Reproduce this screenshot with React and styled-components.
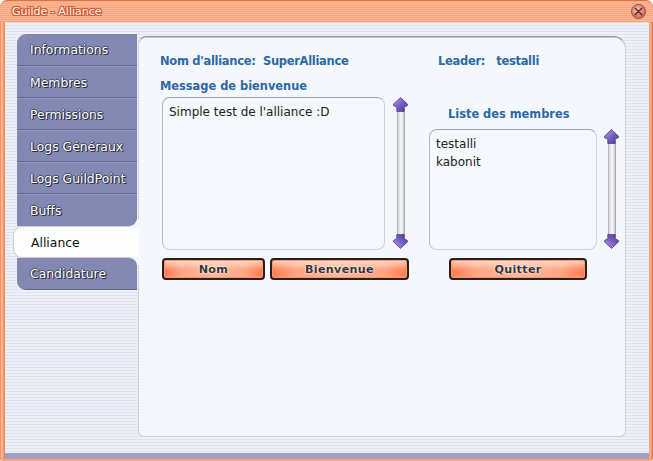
import React from "react";
import styled, { createGlobalStyle, css } from "styled-components";

const Global = createGlobalStyle`
  html, body { margin: 0; padding: 0; background: #ffffff; overflow: hidden; }
  * { box-sizing: border-box; }
`;

const FONT = `"DejaVu Sans", Verdana, sans-serif`;

const Window = styled.div`
  width: 653px;
  height: 461px;
  display: flex;
  flex-direction: column;
  border-radius: 7px 7px 3px 3px;
  background: linear-gradient(to right, #d9693a 0, #fbbb9a 1px, #fbbb9a 2px, #f08a5c 4px, #f08a5c calc(100% - 4px), #fbb898 calc(100% - 3px), #e2703f 100%);
  overflow: hidden;
  font-family: ${FONT};
`;

const TitleBar = styled.div`
  height: 22px;
  flex-shrink: 0;
  display: flex;
  align-items: center;
  justify-content: space-between;
  padding: 0 7px 0 12px;
  border-top: 1px solid #d8754b;
  border-radius: 7px 7px 0 0;
  background:
    repeating-linear-gradient(to bottom, #f7a682 0, #f7a682 1px, #fab796 1px, #fab796 2px);
`;

const Title = styled.span`
  font-size: 11px;
  color: #ffffff;
  line-height: 14px;
  text-shadow: 1px 0 0 #d4582c, -1px 0 0 #d4582c, 0 1px 0 #d4582c, 0 -1px 0 #d4582c,
    1px 1px 0 #d4582c, -1px -1px 0 #d4582c, 1px -1px 0 #d4582c, -1px 1px 0 #d4582c;
`;

const CloseBtn = styled.div`
  width: 15px;
  height: 15px;
  border-radius: 50%;
  border: 1px solid #9c4236;
  background: radial-gradient(circle at 40% 35%, #f8c8be 0, #e08a7c 45%, #c25a4c 100%);
  display: flex;
  align-items: center;
  justify-content: center;
`;

const Body = styled.div`
  flex: 1;
  margin: 0 4px 0 5px;
  display: flex;
  align-items: flex-start;
  padding: 11px 0 0 12px;
  border-top: 1px solid #f6d2c2;
  background: repeating-linear-gradient(to bottom, #eef1f8 0, #eef1f8 2px, #dfe3ef 2px, #dfe3ef 3px);
`;

const BottomBar = styled.div`
  height: 6px;
  margin: 0 4px 0 5px;
  flex-shrink: 0;
  background: linear-gradient(to bottom, #9ea0c6, #a89fbd);
`;

const BottomEdge = styled.div`
  height: 2px;
  flex-shrink: 0;
  background: #f5a480;
`;

const TabColumn = styled.div`
  width: 121px;
  flex-shrink: 0;
  display: flex;
  flex-direction: column;
  position: relative;
  z-index: 2;
`;

const Tab = styled.div`
  height: 32px;
  width: 120px;
  display: flex;
  align-items: center;
  padding-left: 13px;
  font-size: 12.4px;
  color: #ffffff;
  position: relative;
  background: #8288b1;
  border-top: 1px solid #959bc0;
  border-bottom: 1px solid #5f6690;
  text-shadow: 1px 1px 0 #2a2d40, -1px 0 0 #4a4f70, 0 -1px 0 #4a4f70, 1px 0 0 #3a3e58;
  ${(p) => p.$first && css`border-top-left-radius: 9px; border-top: none;`}
  ${(p) => p.$last && css`border-bottom-left-radius: 9px;`}
  ${(p) => p.$beforeActive && css`border-bottom-right-radius: 8px; border-bottom: none;`}
  ${(p) => p.$afterActive && css`border-top-right-radius: 8px; border-top: none;`}
  ${(p) =>
    p.$active &&
    css`
      width: 126px;
      margin-left: -4px;
      padding-left: 17px;
      background: #fdfdfe;
      color: #111111;
      text-shadow: none;
      border: 1px solid #c9ccd3;
      border-right: none;
      border-radius: 9px 0 0 9px;
      z-index: 1;
      &::before, &::after {
        content: "";
        position: absolute;
        right: 0;
        width: 9px;
        height: 9px;
        background: #f4f7fc;
        z-index: -1;
      }
      &::before { top: -8px; }
      &::after { bottom: -8px; }
    `}
  ${(p) => (p.$beforeActive || p.$afterActive) && css`z-index: 2;`}
`;

const Panel = styled.div`
  width: 488px;
  height: 401px;
  margin-top: 2px;
  flex-shrink: 0;
  background: #f4f7fc;
  border: 1px solid #cdd0d6;
  border-top-color: #8f939c;
  border-radius: 8px 12px 6px 6px;
  box-shadow: inset 0 1px 0 #c4c8d0;
  padding: 17px 0 0 21px;
  display: grid;
  grid-template-columns: 249px 190px;
  column-gap: 20px;
  row-gap: 11px;
  align-items: end;
  align-content: start;
`;

const InfoText = styled.div`
  font-size: ${(p) => p.$size || 11.4}px;
  letter-spacing: ${(p) => p.$ls || 0}px;
  font-weight: bold;
  line-height: 14px;
  color: #2d69a4;
  white-space: pre;
  padding-left: ${(p) => p.$indent || 0}px;
`;

const Column = styled.div`
  display: flex;
  flex-direction: column;
`;

const Label = styled(InfoText)`
  margin-bottom: ${(p) => p.$gap}px;
`;

const BoxRow = styled.div`
  display: flex;
  align-items: flex-start;
  gap: ${(p) => p.$gap}px;
  margin-left: ${(p) => p.$offset || 0}px;
`;

const TextBox = styled.div`
  width: ${(p) => p.$w}px;
  height: ${(p) => p.$h}px;
  border: 1px solid #cfd2d7;
  border-top-color: #a3a6ac;
  border-left-color: #b8bbc1;
  border-radius: 8px;
  background: #f5f8fc;
  padding: 5px 6px;
  font-size: 12px;
  line-height: 18px;
  color: #222222;
`;

const Scroll = styled.div`
  width: 15px;
  height: ${(p) => p.$h}px;
  display: flex;
  flex-direction: column;
  align-items: center;
`;

const Track = styled.div`
  flex: 1;
  width: 8px;
  margin: -3px 0;
  border-left: 1px solid #b4b6bc;
  border-right: 1px solid #a8aab0;
  background: linear-gradient(to right, #d2d4d8, #f8f8f9 45%, #e4e5e8 80%, #c6c8cc);
`;

const ButtonRow = styled.div`
  display: flex;
  gap: 5px;
  margin-top: 8px;
  margin-left: ${(p) => p.$offset || 0}px;
`;

const Button = styled.button`
  width: ${(p) => p.$w}px;
  height: 22px;
  padding: 0;
  border: 2px solid #2e1e18;
  border-radius: 4px;
  font-family: ${FONT};
  font-size: 11.2px;
  font-weight: bold;
  letter-spacing: 0.3px;
  color: #3a3434;
  text-shadow: 0 0 2px #ffffff, 0 0 1px #ffffff;
  background:
    linear-gradient(to bottom, rgba(255, 235, 225, 0.8) 0, rgba(255, 220, 200, 0.2) 45%, rgba(255, 255, 255, 0) 60%),
    linear-gradient(to right, #ff7c4c 0, #ffa584 18%, #ffb79c 50%, #ffa584 82%, #ff7c4c 100%);
  box-shadow: inset 0 0 0 1px #f29a78;
`;

const Arrow = ({ down }) => (
  <svg width="15" height="15" viewBox="0 0 15 15" style={{ display: "block", position: "relative", zIndex: 1, transform: down ? "scaleY(-1)" : "none" }}>
    <defs>
      <linearGradient id={down ? "ad" : "au"} x1="0" y1="0" x2="1" y2="1">
        <stop offset="0" stopColor="#b7a2ec" />
        <stop offset="0.5" stopColor="#7a5ec4" />
        <stop offset="1" stopColor="#4f3892" />
      </linearGradient>
    </defs>
    <path
      d="M7.5 0.6 L14.4 7 L14.4 8.6 L11.2 10.3 L11.2 14.6 L3.8 14.6 L3.8 10.3 L0.6 8.6 L0.6 7 Z"
      fill={`url(#${down ? "ad" : "au"})`}
      stroke="#4b3a82"
      strokeWidth="0.8"
      strokeLinejoin="round"
    />
  </svg>
);

const ScrollBar = ({ h }) => (
  <Scroll $h={h}>
    <Arrow />
    <Track />
    <Arrow down />
  </Scroll>
);

const tabs = [
  "Informations",
  "Membres",
  "Permissions",
  "Logs Généraux",
  "Logs GuildPoint",
  "Buffs",
  "Alliance",
  "Candidature",
];
const ACTIVE = 6;

export default function App() {
  return (
    <>
      <Global />
      <Window>
        <TitleBar>
          <Title>Guilde - Alliance</Title>
          <CloseBtn>
            <svg width="9" height="9" viewBox="0 0 9 9">
              <path d="M1.2 1.2 L7.8 7.8 M7.8 1.2 L1.2 7.8" stroke="#5b2a22" strokeWidth="1.4" strokeLinecap="round" />
            </svg>
          </CloseBtn>
        </TitleBar>
        <Body>
          <TabColumn>
            {tabs.map((t, i) => (
              <Tab
                key={t}
                $first={i === 0}
                $last={i === tabs.length - 1}
                $active={i === ACTIVE}
                $beforeActive={i === ACTIVE - 1}
                $afterActive={i === ACTIVE + 1}
              >
                {t}
              </Tab>
            ))}
          </TabColumn>
          <Panel>
            <InfoText $size={11.5} $ls={-0.3}>{"Nom d'alliance:  SuperAlliance"}</InfoText>
            <InfoText $size={11.5} $ls={-0.3} $indent={9}>{"Leader:   testalli"}</InfoText>
            <Column>
              <Label $gap={4}>Message de bienvenue</Label>
              <BoxRow $gap={8} $offset={2}>
                <TextBox $w={223} $h={153}>Simple test de l'alliance :D</TextBox>
                <ScrollBar h={152} />
              </BoxRow>
              <ButtonRow $offset={2}>
                <Button $w={103}>Nom</Button>
                <Button $w={139}>Bienvenue</Button>
              </ButtonRow>
            </Column>
            <Column>
              <Label $gap={8} $indent={19}>Liste des membres</Label>
              <BoxRow $gap={7}>
                <TextBox $w={168} $h={121}>
                  testalli
                  <br />
                  kabonit
                </TextBox>
                <ScrollBar h={120} />
              </BoxRow>
              <ButtonRow $offset={20}>
                <Button $w={138}>Quitter</Button>
              </ButtonRow>
            </Column>
          </Panel>
        </Body>
        <BottomBar />
        <BottomEdge />
      </Window>
    </>
  );
}
